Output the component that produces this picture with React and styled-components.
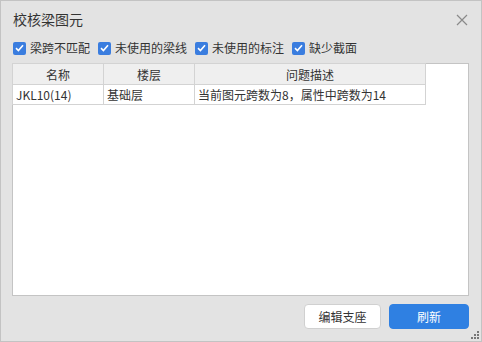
import React from 'react'
import styled, { createGlobalStyle } from 'styled-components'

const GlobalStyle = createGlobalStyle`
  html, body {
    margin: 0;
    padding: 0;
    background: #e3e3e3;
  }
  * {
    box-sizing: border-box;
  }
`

const font = `"Noto Sans CJK SC", "Noto Sans", sans-serif`

const Window = styled.div`
  display: flex;
  flex-direction: column;
  width: 482px;
  height: 342px;
  border: 1px solid #c3c3c3;
  background: #e3e3e3;
  font-family: ${font};
  color: #333;
  position: relative;
`

const TitleBar = styled.div`
  display: flex;
  align-items: center;
  justify-content: space-between;
  height: 36px;
  padding: 0 12px 0 12px;
`

const Title = styled.div`
  font-size: 14px;
  line-height: 14px;
  color: #333;
`

const CloseButton = styled.div`
  width: 14px;
  height: 14px;
  display: flex;
  align-items: center;
  justify-content: center;
  margin-top: 1px;
`

const FilterRow = styled.div`
  display: flex;
  align-items: center;
  gap: 8px;
  padding: 0 12px;
  height: 22px;
`

const CheckItem = styled.label`
  display: flex;
  align-items: center;
  gap: 4px;
  font-size: 12px;
  line-height: 12px;
  color: #333;
`

const Box = styled.span`
  width: 13px;
  height: 13px;
  border-radius: 2px;
  background: #3a7ddf;
  display: flex;
  align-items: center;
  justify-content: center;
`

const TableBox = styled.div`
  flex: 1;
  margin: 4px 12px 0 11px;
  background: #fff;
  border: 1px solid #c4c4c4;
`

const Table = styled.table`
  border-collapse: collapse;
  font-size: 12px;
  table-layout: fixed;
  width: 413px;
  margin: -1px 0 0 -1px;
`

const HeadCell = styled.th`
  width: ${p => p.w}px;
  height: 21px;
  padding: 0;
  font-weight: normal;
  background: #efefef;
  border: 1px solid #d3d3d3;
  text-align: center;
  color: #333;
`

const Cell = styled.td`
  height: 20px;
  padding: 0 0 0 3px;
  border: 1px solid #d3d3d3;
  white-space: nowrap;
  color: #333;
`

const Footer = styled.div`
  display: flex;
  justify-content: flex-end;
  gap: 8px;
  padding: 8px 12px 12px 0;
`

const Button = styled.button`
  width: ${p => (p.primary ? 80 : 77)}px;
  height: 25px;
  border-radius: 4px;
  font-family: ${font};
  font-size: 12px;
  border: 1px solid ${p => (p.primary ? '#2f80e2' : '#d0d0d0')};
  background: ${p => (p.primary ? '#2f80e2' : '#fff')};
  color: ${p => (p.primary ? '#fff' : '#333')};
  padding: 0;
`

const Grip = styled.svg`
  position: absolute;
  right: 1px;
  bottom: 1px;
`

const Check = ({ label }) => (
  <CheckItem>
    <Box>
      <svg width="9" height="8" viewBox="0 0 9 8">
        <path d="M1 4.2 L3.4 6.5 L8 1.2" stroke="#fff" strokeWidth="1.6" fill="none" />
      </svg>
    </Box>
    {label}
  </CheckItem>
)

export default function App() {
  return (
    <>
      <GlobalStyle />
      <Window>
        <TitleBar>
          <Title>校核梁图元</Title>
          <CloseButton>
            <svg width="12" height="12" viewBox="0 0 12 12">
              <path d="M1 1 L11 11 M11 1 L1 11" stroke="#8a8a8a" strokeWidth="1.2" />
            </svg>
          </CloseButton>
        </TitleBar>
        <FilterRow>
          <Check label="梁跨不匹配" />
          <Check label="未使用的梁线" />
          <Check label="未使用的标注" />
          <Check label="缺少截面" />
        </FilterRow>
        <TableBox>
          <Table>
            <thead>
              <tr>
                <HeadCell w={91}>名称</HeadCell>
                <HeadCell w={91}>楼层</HeadCell>
                <HeadCell w={231}>问题描述</HeadCell>
              </tr>
            </thead>
            <tbody>
              <tr>
                <Cell>JKL10(14)</Cell>
                <Cell>基础层</Cell>
                <Cell>当前图元跨数为8，属性中跨数为14</Cell>
              </tr>
            </tbody>
          </Table>
        </TableBox>
        <Footer>
          <Button>编辑支座</Button>
          <Button primary>刷新</Button>
        </Footer>
        <Grip width="10" height="10" viewBox="0 0 10 10">
          <g fill="#777">
            <rect x="7" y="1" width="2" height="2" />
            <rect x="4" y="4" width="2" height="2" />
            <rect x="7" y="4" width="2" height="2" />
            <rect x="1" y="7" width="2" height="2" />
            <rect x="4" y="7" width="2" height="2" />
            <rect x="7" y="7" width="2" height="2" />
          </g>
        </Grip>
      </Window>
    </>
  )
}
